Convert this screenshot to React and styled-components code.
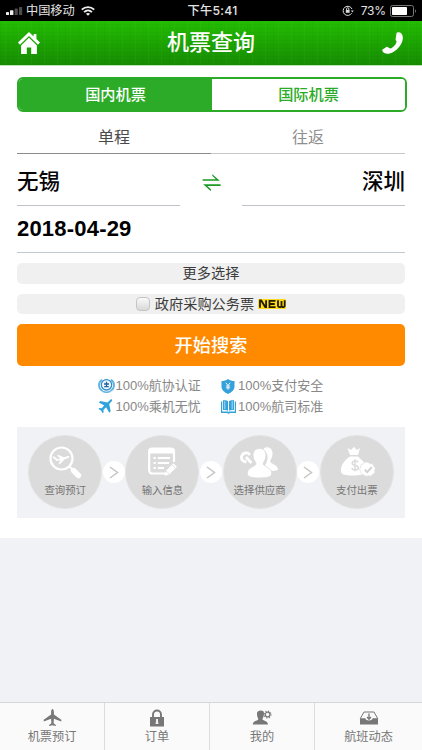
import React from 'react';
import styled, { createGlobalStyle } from 'styled-components';

const GlobalStyle = createGlobalStyle`
  * { box-sizing: border-box; }
  body {
    margin: 0;
    background: #f1f2f5;
    font-family: "Liberation Sans", "Noto Sans CJK SC", sans-serif;
    color: #444;
  }
  svg { display: block; flex: none; }
`;

const Page = styled.div`
  height: 750px;
  width: 422px;
  display: flex;
  flex-direction: column;
  overflow: hidden;
  white-space: nowrap;
`;

const StatusBar = styled.div`
  height: 21px;
  flex: none;
  background: #000;
  color: #e4e4e4;
  display: grid;
  grid-template-columns: 1fr auto 1fr;
  align-items: center;
  padding: 0 5px 0 6px;
  font-family: Inter, "Noto Sans CJK SC", sans-serif;
  font-size: 12.2px;
  line-height: 20px;
`;

const StatusGroup = styled.div`
  display: flex;
  align-items: center;
  justify-content: ${(p) => (p.$end ? 'flex-end' : 'flex-start')};
`;

const Carrier = styled.span`
  margin: 0 6px 0 3px;
`;

const Clock = styled.span`
  padding-left: 2px;
  font-weight: 500;
  letter-spacing: 0.3px;
`;

const Percent = styled.span`
  margin: 0 4px 0 7px;
  font-size: 12px;
  letter-spacing: -0.15px;
`;

const Header = styled.header`
  height: 45px;
  flex: none;
  display: grid;
  grid-template-columns: 60px 1fr 60px;
  align-items: center;
  border-bottom: 1px solid #b9e6b1;
  background:
    repeating-linear-gradient(90deg, rgba(0, 50, 0, 0.03) 0 1px, transparent 1px 5px, rgba(255, 255, 255, 0.03) 5px 6px, transparent 6px 13px),
    repeating-linear-gradient(0deg, rgba(0, 50, 0, 0.03) 0 1px, transparent 1px 4px),
    linear-gradient(#23bd02, #168c02);
`;

const Title = styled.h1`
  margin: 0;
  text-align: center;
  color: #fff;
  font-size: 22px;
  font-weight: 500;
  line-height: 42px;
`;

const HomeSlot = styled.div`
  padding-left: 18px;
`;

const PhoneSlot = styled.div`
  padding-left: 20px;
`;

const Main = styled.main`
  height: 472px;
  flex: none;
  background: #fff;
  padding: 11px 17px 0;
`;

const Segments = styled.div`
  display: flex;
  width: 390px;
  height: 35px;
  border: 2px solid #2bab27;
  border-radius: 6px;
  overflow: hidden;
`;

const Segment = styled.div`
  flex: ${(p) => (p.$active ? '0 0 193px' : '1')};
  background: ${(p) => (p.$active ? '#2bab27' : '#fff')};
  color: ${(p) => (p.$active ? '#fff' : '#2bab27')};
  font-size: 15.2px;
  font-weight: 500;
  line-height: 31px;
  text-align: center;
`;

const TripTabs = styled.div`
  display: grid;
  grid-template-columns: 1fr 1fr;
  height: 42px;
`;

const TripTab = styled.div`
  padding-top: 10px;
  line-height: 31px;
  text-align: center;
  font-size: 16px;
  color: ${(p) => (p.$active ? '#4a4a4a' : '#8e8e8e')};
  border-bottom: 1px solid ${(p) => (p.$active ? '#8d8d8d' : '#c5c7cb')};
`;

const Route = styled.div`
  display: grid;
  grid-template-columns: 163px 1fr 163px;
  height: 52px;
`;

const City = styled.div`
  height: 52px;
  padding-top: 6px;
  color: #050505;
  font-size: 21.5px;
  font-weight: 500;
  line-height: 44px;
  text-align: ${(p) => (p.$right ? 'right' : 'left')};
  border-bottom: 1px solid #bfc2c8;
`;

const SwapSlot = styled.div`
  display: flex;
  justify-content: center;
  padding-top: 20px;
`;

const DateField = styled.div`
  height: 47px;
  border-bottom: 1px solid #c3c8ce;
  color: #000;
  font-size: 22px;
  font-weight: 700;
  letter-spacing: 0.2px;
  line-height: 45px;
`;

const OptionBar = styled.div`
  display: flex;
  align-items: center;
  justify-content: center;
  height: 20.4px;
  margin-top: 10.3px;
  border-radius: 5px;
  background: #f0f0f0;
  color: #3c3c3c;
  font-size: 14.2px;
  line-height: 20px;
`;

const Checkbox = styled.span`
  width: 14px;
  height: 14px;
  margin-right: 5px;
  border: 1px solid #c4c4c4;
  border-radius: 4px;
  background: linear-gradient(#fafafa, #d8d8d8);
`;

const NewBadge = styled.span`
  width: 28px;
  height: 10px;
  margin-left: 4px;
`;

const SearchButton = styled.button`
  display: block;
  width: 100%;
  height: 42px;
  margin-top: 9.6px;
  padding: 2px 0 0;
  border: 0;
  border-radius: 5px;
  background: #ff8a00;
  color: #fff;
  font-family: inherit;
  font-size: 18.2px;
  font-weight: 500;
  line-height: 40px;
`;

const Features = styled.div`
  display: grid;
  grid-template-columns: 123px 105px;
  grid-auto-rows: 20.5px;
  margin: 10px 0 0 81px;
`;

const Feature = styled.div`
  display: flex;
  align-items: center;
  gap: ${(p) => p.$gap}px;
  color: #888;
  font-size: 13px;
  line-height: 20px;
`;

const Steps = styled.div`
  display: flex;
  align-items: center;
  justify-content: center;
  height: 91px;
  margin-top: 10px;
  background: #f1f2f5;
`;

const Step = styled.div`
  display: flex;
  flex-direction: column;
  align-items: center;
  width: 74px;
  height: 74px;
  flex: none;
  padding-top: 8px;
  border: 1px solid #e4e4e5;
  border-radius: 50%;
  background: #dbdbdb;
  color: #747474;
  font-size: 10.4px;
  line-height: 16px;
`;

const StepLabel = styled.span`
  margin-top: 3px;
`;

const StepArrow = styled.div`
  display: flex;
  align-items: center;
  justify-content: center;
  width: 22px;
  height: 22px;
  margin: 0 0.6px;
  flex: none;
  border-radius: 50%;
  background: #fff;
`;

const Footer = styled.nav`
  display: grid;
  grid-template-columns: 105px 105px 105px 107px;
  height: 48px;
  margin-top: auto;
  flex: none;
  border-top: 1px solid #d5d6d8;
  background: #fafafa;
`;

const FooterItem = styled.div`
  display: flex;
  flex-direction: column;
  align-items: center;
  padding-top: 6px;
  border-right: ${(p) => (p.$last ? '0' : '1px solid #dcdcdc')};
  color: #777;
  font-size: 12.2px;
  line-height: 18px;
`;

const FooterLabel = styled.span`
  margin-top: 1px;
`;

const Signal = () => (
  <svg width="17" height="8" viewBox="0 0 17 8">
    <rect x="0" y="5" width="3" height="3" rx=".6" fill="#eee" />
    <rect x="4" y="3.2" width="3.4" height="4.8" rx=".6" fill="#eee" />
    <rect x="8.6" y="1.5" width="3.2" height="6.5" rx=".6" fill="#4c4c4c" />
    <rect x="13" y="0" width="3.2" height="8" rx=".6" fill="#4c4c4c" />
  </svg>
);

const Wifi = () => (
  <svg width="14" height="10" viewBox="0 0 14 10" fill="none" stroke="#eee" strokeWidth="1.9">
    <path d="M.8 3.7C4.3.2 9.7.2 13.2 3.7" />
    <path d="M3.1 6.1c2.2-2.1 5.6-2.1 7.8 0" />
    <path d="M7 9.8 4.9 7.7c1.2-1 3-1 4.2 0z" fill="#eee" stroke="none" />
  </svg>
);

const RotationLock = () => (
  <svg width="12" height="11" viewBox="0 0 12 11" fill="none" stroke="#ddd" strokeWidth="1">
    <path d="M9.7 8.2A4.6 4.6 0 1 1 10 4.1" />
    <path d="m8.9 5.5 1.5 1.9 1.2-2z" fill="#ddd" stroke="none" />
    <rect x="3.8" y="5" width="3.8" height="2.8" fill="#ddd" stroke="none" />
    <path d="M4.6 5V3.8a1.1 1.1 0 0 1 2.2 0V5" />
  </svg>
);

const Battery = () => (
  <svg width="27" height="12" viewBox="0 0 27 12">
    <rect x=".5" y=".5" width="23" height="11" rx="2" fill="none" stroke="#777" />
    <rect x="2" y="2" width="15" height="8" rx=".8" fill="#fff" />
    <path d="M25 4.200c1.3.6 1.3 3 0 3.6z" fill="#777" />
  </svg>
);

const Home = () => (
  <svg width="22" height="22" viewBox="0 0 22 22" fill="#fff">
    <path d="M11 0 15.6 4.4V2h2.8v5.1L22 10.6l-2 2.1-9-8.8-9 8.800-2-2.100z" />
    <path d="m11 5.8 7.9 7.7V22h-5.7v-6.5H8.8V22H3.1v-8.5z" />
  </svg>
);

const Phone = () => (
  <svg width="22" height="22" viewBox="0 0 22 22" fill="#fff">
    <path d="M14.5 1.2c.5-1 3.2-1.2 4.4-.2 3 2.8 2.5 8.3-1.3 13.2-4.4 5.9-11.1 9-15.2 6.9C.9 20.4-.2 18.4.5 17.5l3.9-2.6c1-.5 2.7 1.7 4 1.5 2-.3 5.2-3.6 6-6 .5-1.5-1-1.8-.8-3z" />
  </svg>
);

const Swap = () => (
  <svg width="19" height="18" viewBox="0 0 19 18" fill="#1b9a24">
    <path d="M.6 5.200h13.200L10.300 1.800V.2L17.800 6.800H.6z" />
    <path d="M18.600 11.900H5.400l3.500 3.400V17.200L1.200 10.300h17.400z" />
  </svg>
);

const NewMark = () => (
  <svg width="28" height="10" viewBox="0 0 28 10">
    <rect width="28" height="10" rx="1" fill="#ffdc19" />
    <g fill="none" stroke="#241c00" strokeWidth="1.8">
      <path d="M2 8.7V1.5h1.2l4 6.5h.9V1.2" />
      <path d="M17.5 1.9h-6v6.3h6M11.5 5h5.2" />
      <path d="M20 1.2v6l1.2 1h1.4l1-1 1 1h1.100l1-1v-6M23.500 2v5" />
    </g>
  </svg>
);

const Seal = () => (
  <svg width="17" height="16" viewBox="0 0 17 16" fill="none">
    <path d="M4.200 1.8C-.1 4-.2 10.500 4.600 13M12.800 1.8c4.300 2.200 4.400 8.700-.4 11.200" stroke="#5fb2e2" strokeWidth="1.900" />
    <circle cx="8.500" cy="6.800" r="5.200" stroke="#318bc9" strokeWidth="1.300" fill="#eff8ff" />
    <path d="M8.500 3.700v4.800M6 6h5M6.200 8.600h4.600" stroke="#27629a" strokeWidth="1.300" />
    <path d="M4.500 13.300c2.400 1.100 5.600 1.100 8 0" stroke="#5fb2e2" strokeWidth="1.500" />
  </svg>
);

const BluePlane = () => (
  <svg width="15" height="15" viewBox="0 0 15 15" fill="#31a3dc">
    <path d="M12.400.7c1.300-.9 2.300-.1 1.500 1.200l-2.700 3 1.500 7.400-1.400 1.400-3.200-5.400-2.700 2.700.3 2.300-1 1-1.700-2.700-2.600-1.600 1-1.100 2.300.3 2.500-2.800L.9 3.500l1.300-1.400 7.200 1.300z" />
  </svg>
);

const Shield = () => (
  <svg width="14" height="15" viewBox="0 0 14 15">
    <path d="M7 0c1.8 1.400 4 2 6.500 2v5.500c0 3.500-3 5.900-6.500 7.500C3.500 13.400.5 11 .5 7.500V2C3 2 5.200 1.400 7 0z" fill="#35a0d9" />
    <path d="M4.800 3.800 7 6.400l2.200-2.600M7 6.400v4.300M4.900 7h4.200M4.900 8.800h4.200" stroke="#fff" strokeWidth=".9" fill="none" />
  </svg>
);

const Book = () => (
  <svg width="15" height="14" viewBox="0 0 15 14" fill="#34a2da">
    <path d="M0 1.500h1.200v10H7c.4.600.6.600 1 0h5.800v-10H15V13H9c-.7 1-2.300 1-3 0H0z" />
    <path d="M2 .3c2.200-.4 4 0 5 .9v9.500c-1.300-.8-3-.9-5-.6zM13 .3C10.800-.1 9 .3 8 1.200v9.500c1.300-.8 3-.9 5-.6z" />
    <path d="M3.800 1.200v8M11.200 1.200v8" stroke="#a9dcf5" strokeWidth="1" />
  </svg>
);

const Chevron = () => (
  <svg width="10" height="13" viewBox="0 0 10 13" fill="none" stroke="#c5c5c5" strokeWidth="1.5">
    <path d="m1 1 7.500 5.500L1 12" />
  </svg>
);

const SearchStep = () => (
  <svg width="36" height="36" viewBox="0 0 36 36" fill="none" stroke="#fff">
    <circle cx="14.500" cy="14.500" r="11" strokeWidth="2.200" />
    <path d="m22.500 22.500 2.500 2.500" strokeWidth="2" />
    <path d="m26.500 26.500 5 5" strokeWidth="5.400" strokeLinecap="round" />
    <path d="m7 11.300 3.800 3 2.300-.8-3.200-3.300 1.600-.3 5.500 2.300 4-1.300c2 0 2 1.300.2 2l-3.700 1.500-4.500 4.600-1.500.2 1.700-4-3.600.8-4.300-3.900z" fill="#fff" stroke="none" transform="translate(0 1)" />
  </svg>
);

const FormStep = () => (
  <svg width="36" height="36" viewBox="0 0 36 36" fill="none" stroke="#fff">
    <path d="M22 29.500H8.200a3 3 0 0 1-3-3V7.500a3 3 0 0 1 3-3H27a3 3 0 0 1 3 3V18" strokeWidth="2.200" />
    <path d="M4.600 7a3 3 0 0 1 3-3h19.800a3 3 0 0 1 3 3v2.500H4.600z" fill="#fff" stroke="none" />
    <path d="M9.500 14h2.300M9.500 19h2.300M9.500 24h2.300" strokeWidth="2.200" />
    <path d="M13.800 14H26M13.800 19H25M13.800 24H20" strokeWidth="1.800" />
    <path d="m20.500 32 1.600-5.300 7.300-7.400 3.500 3.500-7.400 7.500z" fill="#fff" stroke="none" />
    <path d="m22.300 27 2.800 2.800m2.900-8.900 3.500 3.500" stroke="#dbdbdb" strokeWidth=".8" />
  </svg>
);

const PeopleStep = () => (
  <svg width="40" height="36" viewBox="0 0 40 36" fill="#fff">
    <path d="M23.200 5.500C24.500 2.400 32 2 32.500 9c.2 4-1.300 5.800-2.300 7.600 0 2 .8 2.500 3.200 3.600 3 1.300 4.600 2.800 4.600 5.600-2 1.200-5 1.300-7.500.8-2-2-5.500-3.300-5.500-5.300 3-4 4.500-12-1.800-15.800z" />
    <path d="M19.500 4.500c6.500 0 7.200 6 5.900 10.300-.7 2.300-2.200 3-2.200 5.200 0 2.400 8.500 3.300 8.500 9.200 0 3-2.300 4.700-12.200 4.700S7.300 32.200 7.300 29.200C7.300 23.300 16 22.400 16 20c0-2.200-1.700-2.900-2.400-5.200-1.300-4.300-.6-10.300 5.900-10.300z" stroke="#dbdbdb" strokeWidth=".8" />
    <path d="M6.500 18c-4-.5-6-3.200-4.600-6.400 1.400-3 5.400-3.700 8-.7M5.900 13l5.600 6" fill="none" stroke="#fff" strokeWidth="2.800" />
  </svg>
);

const MoneyStep = () => (
  <svg width="40" height="36" viewBox="0 0 40 36" fill="#fff">
    <path d="m10.500 4 3.400 2L17 3.100 20 6l3-2-2 7h-8zM13 12.500h8c3.500 3 7.500 6.600 8.500 12-2.500 1-4.500 3-4 6.200-5 1-14 1.200-18 .1C1 29.500 3.500 18.500 13 12.500z" />
    <path d="M21.200 18.200c-2-1.900-6-1.300-6 1 0 2.800 6.100 1.400 6.100 4.500 0 2.700-5 3-6.800.5M18 15.300v12" fill="none" stroke="#dbdbdb" strokeWidth="1.500" />
    <path d="m31 18.300 2.200 1.300 2.600.1.900 2.400 1.800 1.900-.8 2.400.2 2.600-2.300 1.300-1.700 1.900-2.600-.4-2.400.8-2.100-1.600-2.500-.8-.4-2.600-1.400-2.200 1.300-2.300.2-2.500 2.500-.9 1.900-1.700z" stroke="#dbdbdb" strokeWidth=".7" />
    <path d="m27.700 25.700 2.500 2.500 4.500-5" fill="none" stroke="#d0d0d0" strokeWidth="1.800" />
  </svg>
);

const FooterPlane = () => (
  <svg width="19" height="18" viewBox="0 0 19 18" fill="#777">
    <path d="M9.500 0c.8 0 1.400 1.500 1.400 3v2.500l7.400 5.200v1.700l-7.400-2.700-.3 4.600 2.300 1.800V17l-3.400-.7-3.400.7v-.9l2.300-1.800-.3-4.600-7.400 2.700v-1.700l7.400-5.200V3c0-1.500.6-3 1.400-3z" />
  </svg>
);

const FooterLock = () => (
  <svg width="16" height="18" viewBox="0 0 16 18">
    <path d="M4 8V5.500a4 4 0 0 1 8 0V8" fill="none" stroke="#777" strokeWidth="1.900" />
    <path d="M1 8h14v9.500H1z" fill="#777" />
    <path d="M7 10h2v2l.5 3h-3l.5-3z" fill="#eee" />
  </svg>
);

const FooterUser = () => (
  <svg width="20" height="18" viewBox="0 0 20 18" fill="#777">
    <path d="M5 4c0-3 7-3.500 7 0 0 3-.6 4.500-1.700 6 0 1.800 5.700 1.500 5.700 5.500H.8c0-4 5.600-3.700 5.600-5.500C5.400 8.500 5 7 5 4z" />
    <circle cx="15.600" cy="5.500" r="2.300" fill="none" stroke="#777" strokeWidth="1.200" />
    <circle cx="15.600" cy="5.500" r="3.400" fill="none" stroke="#777" strokeWidth="1.200" strokeDasharray="1.200 1.470" />
  </svg>
);

const FooterTray = () => (
  <svg width="20" height="18" viewBox="0 0 20 18" fill="none" stroke="#777">
    <path d="M1.300 9.500 5 3h10l3.700 6.500" strokeWidth="1" />
    <path d="M1 9.300h5.300c.5 3 6.900 3 7.400 0H19V15.500H1z" fill="#777" stroke="none" />
    <path d="M10 4.500v5.300M8 8l2 2.200L12 8" strokeWidth="1.300" />
  </svg>
);

const features = [
  { label: '100%航协认证', Icon: Seal, gap: 0.5 },
  { label: '100%支付安全', Icon: Shield, gap: 3 },
  { label: '100%乘机无忧', Icon: BluePlane, gap: 2.5 },
  { label: '100%航司标准', Icon: Book, gap: 2 },
];

const steps = [
  { label: '查询预订', Icon: SearchStep },
  { label: '输入信息', Icon: FormStep },
  { label: '选择供应商', Icon: PeopleStep },
  { label: '支付出票', Icon: MoneyStep },
];

const footerItems = [
  { label: '机票预订', Icon: FooterPlane },
  { label: '订单', Icon: FooterLock },
  { label: '我的', Icon: FooterUser },
  { label: '航班动态', Icon: FooterTray },
];

export default function App() {
  return (
    <>
      <GlobalStyle />
      <Page>
        <StatusBar>
          <StatusGroup>
            <Signal />
            <Carrier>中国移动</Carrier>
            <Wifi />
          </StatusGroup>
          <Clock>下午5:41</Clock>
          <StatusGroup $end>
            <RotationLock />
            <Percent>73%</Percent>
            <Battery />
          </StatusGroup>
        </StatusBar>
        <Header>
          <HomeSlot><Home /></HomeSlot>
          <Title>机票查询</Title>
          <PhoneSlot><Phone /></PhoneSlot>
        </Header>
        <Main>
          <Segments>
            <Segment $active>国内机票</Segment>
            <Segment>国际机票</Segment>
          </Segments>
          <TripTabs>
            <TripTab $active>单程</TripTab>
            <TripTab>往返</TripTab>
          </TripTabs>
          <Route>
            <City>无锡</City>
            <SwapSlot><Swap /></SwapSlot>
            <City $right>深圳</City>
          </Route>
          <DateField>2018-04-29</DateField>
          <OptionBar>更多选择</OptionBar>
          <OptionBar>
            <Checkbox />
            政府采购公务票
            <NewBadge role="img" aria-label="NEW"><NewMark /></NewBadge>
          </OptionBar>
          <SearchButton>开始搜索</SearchButton>
          <Features>
            {features.map(({ label, Icon, gap }) => (
              <Feature key={label} $gap={gap}><Icon />{label}</Feature>
            ))}
          </Features>
          <Steps>
            {steps.map(({ label, Icon }, i) => (
              <React.Fragment key={label}>
                {i > 0 && <StepArrow><Chevron /></StepArrow>}
                <Step><Icon /><StepLabel>{label}</StepLabel></Step>
              </React.Fragment>
            ))}
          </Steps>
        </Main>
        <Footer>
          {footerItems.map(({ label, Icon }, i) => (
            <FooterItem key={label} $last={i === footerItems.length - 1}>
              <Icon />
              <FooterLabel>{label}</FooterLabel>
            </FooterItem>
          ))}
        </Footer>
      </Page>
    </>
  );
}
